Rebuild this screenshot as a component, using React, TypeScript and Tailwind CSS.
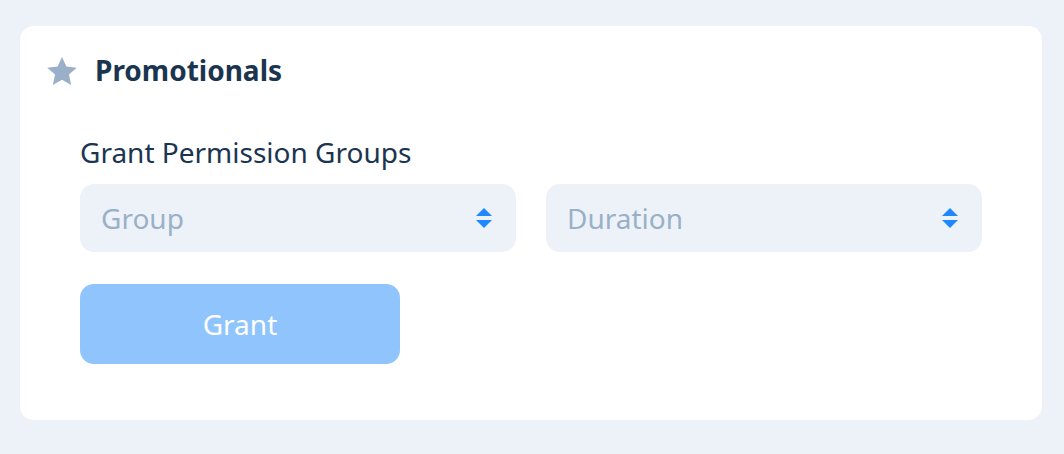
function SelectBox({ placeholder }: { placeholder: string }) {
    return (
        <div className="flex-1 h-[68px] rounded-[14px] bg-[#edf2f9] flex items-center justify-between pl-[21px] pr-[24px]">
            <span className="text-[28px] text-[#9ab0c8] leading-[34px]">{placeholder}</span>
            <svg width="16" height="20" viewBox="0 0 16 20" className="text-[#1e88fc]">
                <path d="M8 0 L16 8 L0 8 Z" fill="currentColor" />
                <path d="M0 12 L16 12 L8 20 Z" fill="currentColor" />
            </svg>
        </div>
    );
}

export default function App() {
    return (
        <div className="min-h-screen bg-[#edf2f9] pl-[20px] pr-[22px] py-[26px] font-['Noto_Sans',sans-serif]">
            <div className="bg-white rounded-[14px] pb-[56px]">
                {/* Header */}
                <div className="flex items-center gap-[18px] pl-[27px] pt-[28px]">
                    <svg width="30" height="28" viewBox="1.2 1.2 21.6 20.5" className="text-[#9ab0c8] mt-[1px]">
                        <path
                            d="M12 1.2 L15.2 8.2 L22.8 9 L17.1 14.1 L18.7 21.7 L12 17.9 L5.3 21.7 L6.9 14.1 L1.2 9 L8.8 8.2 Z"
                            fill="currentColor"
                        />
                    </svg>
                    <h2 className="text-[28px] font-bold text-[#1b3550] leading-[32px]">Promotionals</h2>
                </div>

                <div className="px-[60px] pt-[49px]">
                    <p className="text-[28px] text-[#1b3550] leading-[34px]">Grant Permission Groups</p>
                    <div className="flex gap-[30px] mt-[15px]">
                        <SelectBox placeholder="Group" />
                        <SelectBox placeholder="Duration" />
                    </div>
                    <button className="mt-[32px] w-[320px] h-[80px] rounded-[14px] bg-[#8fc4fd] text-white text-[28px]">
                        Grant
                    </button>
                </div>
            </div>
        </div>
    );
}
